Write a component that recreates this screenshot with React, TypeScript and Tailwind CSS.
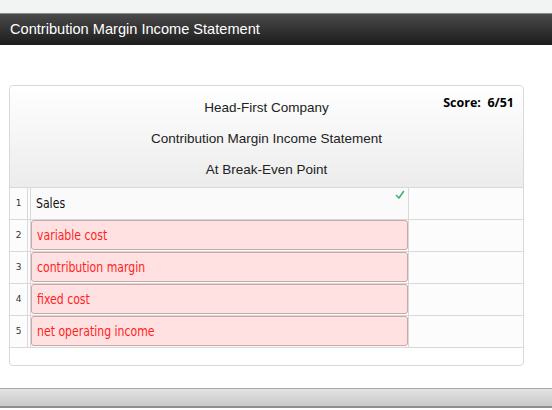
import React from 'react';

const rows = [
  { n: 1, label: 'Sales', ok: true },
  { n: 2, label: 'variable cost', ok: false },
  { n: 3, label: 'contribution margin', ok: false },
  { n: 4, label: 'fixed cost', ok: false },
  { n: 5, label: 'net operating income', ok: false },
];

const cellFont = { fontFamily: '"DejaVu Sans", sans-serif' };

function Label({ text }: { text: string }) {
  return <span className="inline-block whitespace-nowrap origin-left [transform:scaleX(0.78)]">{text}</span>;
}

export default function App() {
  return (
    <div className="w-[552px] h-[410px] bg-white flex flex-col overflow-hidden" style={{ fontFamily: '"Liberation Sans", Arial, sans-serif' }}>
      <div className="h-[14px] bg-[#f2f3f3] border-b border-[#8a8a8a]" />
      <div className="h-[31px] bg-gradient-to-b from-[#4b4b4b] to-[#1c1c1c] flex items-center px-[10px] text-white text-[14.6px]">
        Contribution Margin Income Statement
      </div>

      <div className="flex-1 pt-[40px] pl-[9px]">
        <div className="w-[515px] border border-[#d9d9d9] rounded-[4px] pb-[17px]">
          {/* header */}
          <div className="relative h-[101px] pt-[6px] bg-gradient-to-b from-white to-[#ececec] rounded-t-[4px] text-[13.5px] text-[#222] text-center leading-[31px]">
            <div>Head-First Company</div>
            <div>Contribution Margin Income Statement</div>
            <div>At Break-Even Point</div>
            <div className="absolute right-[9px] top-[9px] text-[12.5px] leading-[16px] font-bold text-black" style={{ fontFamily: '"Open Sans", sans-serif' }}>
              Score:&nbsp; 6/51
            </div>
          </div>

          {/* table */}
          <div className="w-[515px] -ml-px border-t border-[#d9d9d9]">
            {rows.map((r) => (
              <div key={r.n} className="flex h-[32px] border-b border-[#d9d9d9]" style={cellFont}>
                <div className="w-[19px] border-l border-r border-[#d9d9d9] bg-[#fcfcfc] flex items-center justify-center text-[9px] text-[#333]">
                  {r.n}
                </div>
                <div className="w-[2px] bg-[#fcfcfc]" />
                <div className="relative w-[379px] border-l border-r border-[#d9d9d9] bg-[#fafafa]">
                  {r.ok ? (
                    <>
                      <div className="h-full flex items-center pl-[5px] text-[14px] text-[#111]"><Label text={r.label} /></div>
                      <svg className="absolute right-[3px] top-[2px]" width="10" height="10" viewBox="0 0 10 10">
                        <path d="M1.5 5.5 L4 8 L8.5 1.5" fill="none" stroke="#3cb371" strokeWidth="1.6" strokeLinecap="round" strokeLinejoin="round" />
                      </svg>
                    </>
                  ) : (
                    <div className="absolute inset-x-0 top-0 bottom-[1px] bg-[#ffe1e1] border border-[#c8a8a8] rounded-[3px] flex items-center pl-[5px] text-[14px] text-[#ff1e1e]">
                      <Label text={r.label} />
                    </div>
                  )}
                </div>
                <div className="flex-1 border-r border-[#d9d9d9] bg-[#fcfcfc]" />
              </div>
            ))}
          </div>
        </div>
      </div>

      <div className="h-[20px] border-t border-[#a8a8a8] border-b-2 border-b-[#8f8f8f] bg-gradient-to-b from-[#e3e3e3] to-[#c9c9c9] mb-[2px]" />
    </div>
  );
}
